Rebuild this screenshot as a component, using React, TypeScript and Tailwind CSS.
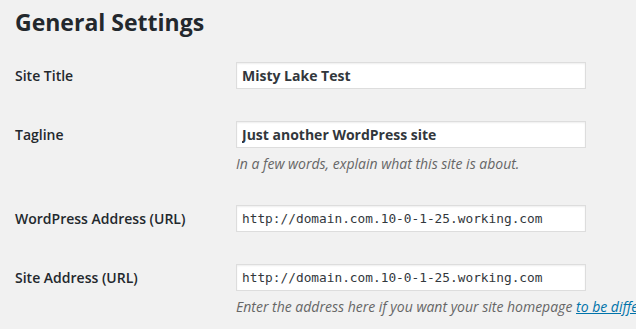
export default function App() {
  const label =
    "w-[221px] shrink-0 text-[14px] leading-[27px] font-semibold text-[#23282d]";
  const input =
    "w-[350px] h-[27px] border border-[#ddd] bg-white px-[5px] text-[#32373c] shadow-[inset_0_1px_2px_rgba(0,0,0,0.07)] outline-none";
  const mono = "font-['DejaVu_Sans_Mono',monospace] text-[12.8px]";
  const desc = "mt-[6px] text-[14px] leading-[20px] italic text-[#666] whitespace-nowrap";

  return (
    <div className="w-[636px] h-[329px] overflow-hidden bg-[#f1f1f1] font-['Open_Sans',sans-serif] px-[15px]">
      <h1 className="pt-[8px] text-[23px] leading-[29px] font-bold text-[#23282d]">
        General Settings
      </h1>

      <div className="pt-[25px]">
        <div className="flex items-start">
          <div className={label}>Site Title</div>
          <input className={`${input} text-[14px] font-bold`} defaultValue="Misty Lake Test" />
        </div>

        <div className="flex items-start pt-[32px]">
          <div className={label}>Tagline</div>
          <div>
            <input
              className={`${input} text-[14px] font-bold`}
              defaultValue="Just another WordPress site"
            />
            <p className={desc}>In a few words, explain what this site is about.</p>
          </div>
        </div>

        <div className="flex items-start pt-[31px]">
          <div className={label}>WordPress Address (URL)</div>
          <input className={`${input} ${mono}`} defaultValue="http://domain.com.10-0-1-25.working.com" />
        </div>

        <div className="flex items-start pt-[32px]">
          <div className={label}>Site Address (URL)</div>
          <div>
            <input
              className={`${input} ${mono} border-[#5b9dd9] shadow-[0_0_2px_rgba(30,140,190,0.8)]`}
              defaultValue="http://domain.com.10-0-1-25.working.com"
            />
            <p className={desc}>
              Enter the address here if you want your site homepage{" "}
              <a href="#" className="text-[#0073aa] underline">
                to be different from your WordPress installation directory
              </a>
              .
            </p>
          </div>
        </div>
      </div>
    </div>
  );
}
